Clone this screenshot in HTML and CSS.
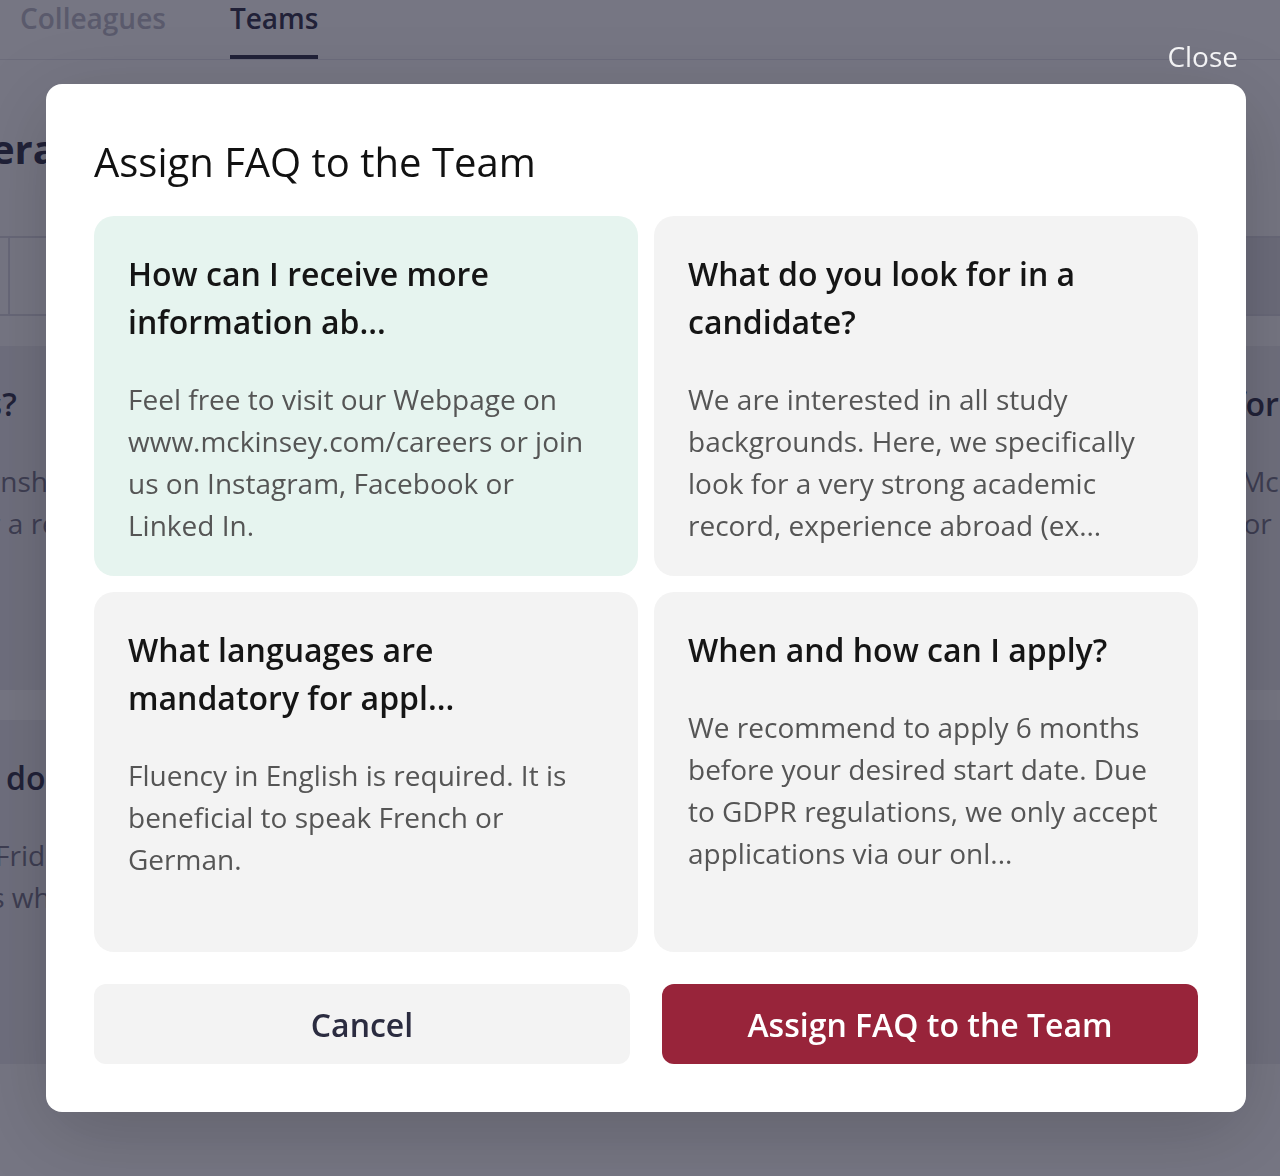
FILE: index.html
```html
<!DOCTYPE html>
<html lang="en">
<head>
    <meta charset="UTF-8">
    <meta name="viewport" content="width=device-width, initial-scale=1.0">
    <title>Teams - FAQ</title>
    <link rel="stylesheet" href="styles.css">
</head>
<body>
    <div class="page">
        <nav class="tabs">
            <a class="tab">Colleagues</a>
            <a class="tab active">Teams</a>
        </nav>

        <div class="scroller">
            <div class="scroller-inner">
                <h2 class="section-title">General questions</h2>

                <div class="toolbar">
                    <div class="tool-cell narrow"></div>
                    <div class="tool-cell wide"></div>
                    <div class="tool-cell filled"></div>
                </div>

                <div class="faq-list">
                    <div class="faq-item">
                        <h3>Do you run internships?</h3>
                        <p>Yes, we offer summer internships in all offices.<br>Students can also apply for a regular position.</p>
                    </div>
                    <div class="faq-item">
                        <h3>How does the interview work?</h3>
                        <p>The interview process consists of two rounds<br>with case and personal interviews.</p>
                    </div>
                    <div class="faq-item">
                        <h3>What do you look for</h3>
                        <p>You can find it on the McKinsey website,<br>career page, LinkedIn or Instagram.</p>
                    </div>
                    <div class="faq-item">
                        <h3>What kind of task will I do</h3>
                        <p>You work from Monday to Friday at the client<br>in contact with client teams which vary.</p>
                    </div>
                    <div class="faq-item">
                        <h3>Where are your offices?</h3>
                        <p>We have offices in more than 60 countries.</p>
                    </div>
                    <div class="faq-item">
                        <h3>Part-time work?</h3>
                        <p>Yes, it is possible.</p>
                    </div>
                </div>
            </div>
        </div>
    </div>

    <div class="overlay">
        <div class="dialog-wrap">
            <button class="close-btn">Close</button>

            <div class="dialog">
                <h1>Assign FAQ to the Team</h1>

                <div class="dialog-grid">
                    <div class="faq-card selected">
                        <h3>How can I receive more information ab...</h3>
                        <p>Feel free to visit our Webpage on www.mckinsey.com/careers or join us on Instagram, Facebook or Linked In.</p>
                    </div>
                    <div class="faq-card">
                        <h3>What do you look for in a candidate?</h3>
                        <p>We are interested in all study backgrounds. Here, we specifically look for a very strong academic record, experience abroad (ex...</p>
                    </div>
                    <div class="faq-card">
                        <h3>What languages are mandatory for appl...</h3>
                        <p>Fluency in English is required. It is beneficial to speak French or German.</p>
                    </div>
                    <div class="faq-card">
                        <h3>When and how can I apply?</h3>
                        <p>We recommend to apply 6 months before your desired start date. Due to GDPR regulations, we only accept applications via our onl...</p>
                    </div>
                </div>

                <div class="actions">
                    <button class="btn btn-cancel">Cancel</button>
                    <button class="btn btn-primary">Assign FAQ to the Team</button>
                </div>
            </div>
        </div>
    </div>
</body>
</html>
```

FILE: styles.css
```css
* {
    box-sizing: border-box;
}
body {
    margin: 0;
    font-family: "Open Sans", "Liberation Sans", sans-serif;
    background-color: #ffffff;
    color: #2b2c44;
    overflow: hidden;
}
h1, h2, h3, p {
    margin: 0;
}

/* page behind the dialog */
.page {
    height: 1176px;
    overflow: hidden;
}
.tabs {
    display: flex;
    gap: 64px;
    padding: 0 20px;
    height: 60px;
    border-bottom: 1px solid #e6e6ec;
}
.tab {
    font-size: 28px;
    font-weight: 600;
    line-height: 36px;
    padding-bottom: 20px;
    border-bottom: 4px solid transparent;
    color: #b9b9c6;
}
.tab.active {
    color: #2b2c44;
    border-bottom-color: #2b2c44;
}
.scroller {
    overflow: hidden;
}
.scroller-inner {
    margin-left: -387px;
    width: 1960px;
}
.section-title {
    height: 176px;
    display: flex;
    align-items: center;
    padding-left: 299px;
    font-size: 40px;
    font-weight: 700;
    color: #2b2c44;
}
.toolbar {
    display: flex;
    height: 80px;
    border-top: 2px solid #dcdce4;
    border-bottom: 2px solid #dcdce4;
}
.tool-cell {
    border-right: 2px solid #dcdce4;
}
.tool-cell.narrow {
    width: 397px;
}
.tool-cell.wide {
    width: 1190px;
}
.tool-cell.filled {
    flex: 1;
    background-color: #e4e4ea;
}
.faq-list {
    display: grid;
    grid-template-columns: repeat(3, 624px);
    grid-auto-rows: 344px;
    gap: 30px;
    margin-top: 30px;
}
.faq-item {
    background-color: #eeeef2;
    border-radius: 20px;
    padding: 34px 35px;
}
.faq-item h3 {
    font-size: 32px;
    font-weight: 600;
    line-height: 48px;
    margin-bottom: 32px;
    white-space: nowrap;
}
.faq-item p {
    font-size: 28px;
    line-height: 42px;
    color: #737385;
    white-space: nowrap;
}

/* dialog */
.overlay {
    position: fixed;
    inset: 0;
    background-color: rgba(26, 27, 48, 0.6);
    padding: 38px 0 0 46px;
}
.dialog-wrap {
    width: 1200px;
    display: flex;
    flex-direction: column;
}
.close-btn {
    align-self: flex-end;
    margin: 0 8px 10px 0;
    padding: 0;
    border: none;
    background: none;
    font-family: inherit;
    font-size: 28px;
    line-height: 36px;
    color: #f7f7f9;
    cursor: pointer;
}
.dialog {
    background-color: white;
    border-radius: 16px;
    padding: 48px;
    box-shadow: 0 20px 80px rgba(0, 0, 0, 0.18);
}
.dialog h1 {
    font-size: 40px;
    font-weight: 400;
    line-height: 60px;
    color: #111111;
    margin-bottom: 24px;
}
.dialog-grid {
    display: grid;
    grid-template-columns: 1fr 1fr;
    grid-auto-rows: 360px;
    gap: 16px;
}
.faq-card {
    background-color: #f3f3f3;
    border-radius: 20px;
    padding: 34px 35px 34px 34px;
}
.faq-card.selected {
    background-color: #e6f4ef;
}
.faq-card h3 {
    font-size: 32px;
    font-weight: 600;
    line-height: 48px;
    color: #151515;
    margin-bottom: 32px;
}
.faq-card p {
    font-size: 28px;
    line-height: 42px;
    color: #555555;
}
.actions {
    display: grid;
    grid-template-columns: 1fr 1fr;
    gap: 32px;
    margin-top: 32px;
}
.btn {
    height: 80px;
    border: none;
    border-radius: 12px;
    font-family: inherit;
    font-size: 32px;
    font-weight: 600;
    cursor: pointer;
}
.btn-cancel {
    background-color: #f3f3f3;
    color: #2b2c40;
}
.btn-primary {
    background-color: #98243a;
    color: white;
}
```
